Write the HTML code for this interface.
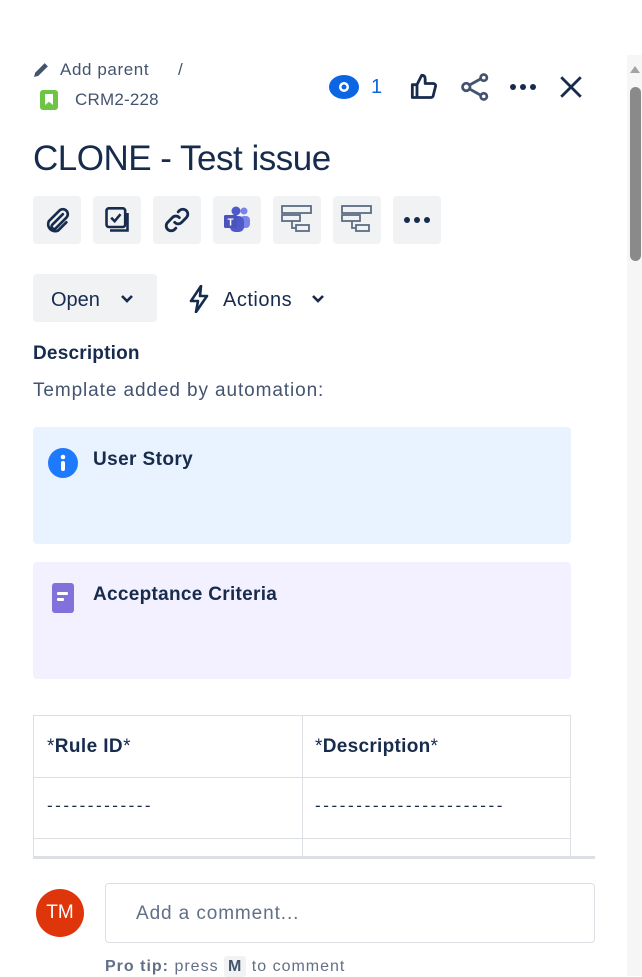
<!DOCTYPE html>
<html><head><meta charset="utf-8"><style>
*{box-sizing:border-box;margin:0;padding:0}
body{width:642px;height:976px;overflow:hidden;background:#fff;font-family:"Liberation Sans",sans-serif;color:#172b4d;position:relative}
.a{position:absolute}
.btn{position:absolute;top:196px;width:48px;height:48px;background:#f1f2f4;border-radius:4px;display:flex;align-items:center;justify-content:center}
</style></head><body>
<svg class="a" style="left:33px;top:61px" width="17" height="17" viewBox="0 0 16 16"><path d="M1 15l1-4 9-9 3 3-9 9z" fill="#44546f"/></svg>
<div class="a" style="left:60px;top:60px;font-size:17px;color:#44546f;letter-spacing:0.6px">Add parent</div>
<div class="a" style="left:178px;top:60px;font-size:17px;color:#44546f">/</div>
<div class="a" style="left:40px;top:90px;width:18px;height:20px;background:#6cc644;border-radius:3px"><div style="position:absolute;left:5px;top:4px;width:8px;height:11px;background:#fff;clip-path:polygon(0 0,100% 0,100% 100%,50% 70%,0 100%)"></div></div>
<div class="a" style="left:75px;top:90px;font-size:17px;color:#44546f;letter-spacing:0.2px">CRM2-228</div>
<svg class="a" style="left:329px;top:74px" width="30" height="26" viewBox="0 0 30 26"><ellipse cx="15" cy="13" rx="15" ry="12" fill="#0c66e4"/><circle cx="15" cy="13" r="5" fill="#fff"/><circle cx="15" cy="13" r="2.5" fill="#0c66e4"/></svg>
<div class="a" style="left:371px;top:76px;font-size:20px;color:#0c66e4">1</div>
<svg class="a" style="left:410px;top:73px" width="28" height="28" viewBox="0 0 24 24" fill="none" stroke="#172b4d" stroke-width="2.4" stroke-linejoin="round"><path d="M2 10h4v11H2zM6 10l4-8c2 0 3 1 3 3v4h7c1 0 2 1 2 2l-2 8c0 1-1 2-2 2H6"/></svg>
<svg class="a" style="left:460px;top:72px" width="30" height="30" viewBox="0 0 24 24" fill="none" stroke="#44546f" stroke-width="2.2"><circle cx="5" cy="12" r="3"/><circle cx="19" cy="4.5" r="2.5"/><circle cx="19" cy="19.5" r="2.5"/><path d="M7.5 10.5l9-5M7.5 13.5l9 5"/></svg>
<svg class="a" style="left:508px;top:80px" width="30" height="14"><circle cx="5" cy="7" r="3" fill="#172b4d"/><circle cx="15" cy="7" r="3" fill="#172b4d"/><circle cx="25" cy="7" r="3" fill="#172b4d"/></svg>
<svg class="a" style="left:558px;top:74px" width="26" height="26" viewBox="0 0 24 24" stroke="#172b4d" stroke-width="2.6"><path d="M3 3l18 18M21 3L3 21"/></svg>
<div class="a" style="left:33px;top:139px;font-size:35px;font-weight:500;letter-spacing:-0.5px">CLONE - Test issue</div>
<div class="btn" style="left:33px"><svg width="28" height="28" viewBox="0 0 24 24" fill="none" stroke="#172b4d" stroke-width="2.3" stroke-linecap="round"><path d="M17 7l-9 9a2 2 0 0 0 3 3l9-9a4 4 0 0 0-6-6l-9 9a6 6 0 0 0 8 8l7-7"/></svg></div>
<div class="btn" style="left:93px"><svg width="28" height="28" viewBox="0 0 24 24" fill="none" stroke="#172b4d" stroke-width="2.2"><rect x="3" y="2" width="16" height="16" rx="2"/><path d="M7 10l3 3 5-6"/><path d="M6 21h15V6"/></svg></div>
<div class="btn" style="left:153px"><svg width="28" height="28" viewBox="0 0 24 24" fill="none" stroke="#172b4d" stroke-width="2.4" stroke-linecap="round"><path d="M10 14a4 4 0 0 0 6 0l4-4a4 4 0 0 0-6-6l-1 1M14 10a4 4 0 0 0-6 0l-4 4a4 4 0 0 0 6 6l1-1"/></svg></div>
<div class="btn" style="left:213px"><svg width="30" height="30" viewBox="0 0 30 30"><circle cx="22" cy="6" r="3.5" fill="#7b83eb"/><rect x="18" y="11" width="10" height="12" rx="4" fill="#7b83eb"/><circle cx="14" cy="6" r="4.5" fill="#5059c9"/><rect x="8" y="11" width="14" height="16" rx="5" fill="#5059c9"/><rect x="2" y="10" width="13" height="13" rx="1.5" fill="#4b53bc"/><text x="8.5" y="20.5" font-size="10" font-weight="700" fill="#fff" text-anchor="middle" font-family="Liberation Sans">T</text></svg></div>
<div class="btn" style="left:273px"><svg width="34" height="34" viewBox="0 0 34 34" fill="none" stroke="#5e6c84" stroke-width="1.8"><rect x="2" y="3" width="29" height="7"/><rect x="2" y="12" width="18" height="6"/><rect x="16" y="22" width="13" height="6"/><path d="M12 18v7h4"/></svg></div>
<div class="btn" style="left:333px"><svg width="34" height="34" viewBox="0 0 34 34" fill="none" stroke="#5e6c84" stroke-width="1.8"><rect x="2" y="3" width="29" height="7"/><rect x="2" y="12" width="18" height="6"/><rect x="16" y="22" width="13" height="6"/><path d="M12 18v7h4"/></svg></div>
<div class="btn" style="left:393px"><svg width="30" height="10"><circle cx="5" cy="5" r="3" fill="#172b4d"/><circle cx="15" cy="5" r="3" fill="#172b4d"/><circle cx="25" cy="5" r="3" fill="#172b4d"/></svg></div>
<div class="a" style="left:33px;top:274px;width:124px;height:48px;background:#f1f2f4;border-radius:4px"></div>
<div class="a" style="left:51px;top:289px;font-size:20px">Open</div>
<svg class="a" style="left:120px;top:294px" width="14" height="10" viewBox="0 0 14 10" fill="none" stroke="#172b4d" stroke-width="2.6"><path d="M2 2l5 5 5-5"/></svg>
<svg class="a" style="left:188px;top:285px" width="22" height="28" viewBox="0 0 22 28"><path d="M13 1L3 16h7l-2 11 11-16h-7z" fill="none" stroke="#172b4d" stroke-width="2.6" stroke-linejoin="round"/></svg>
<div class="a" style="left:223px;top:289px;font-size:20px;letter-spacing:0.5px">Actions</div>
<svg class="a" style="left:311px;top:294px" width="14" height="10" viewBox="0 0 14 10" fill="none" stroke="#172b4d" stroke-width="2.6"><path d="M2 2l5 5 5-5"/></svg>
<div class="a" style="left:33px;top:343px;font-size:19px;font-weight:700;letter-spacing:0.2px">Description</div>
<div class="a" style="left:33px;top:380px;font-size:19px;color:#44546f;letter-spacing:0.9px">Template added by automation:</div>
<div class="a" style="left:33px;top:427px;width:538px;height:117px;background:#e9f2ff;border-radius:4px"></div>
<svg class="a" style="left:48px;top:448px" width="30" height="30" viewBox="0 0 30 30"><circle cx="15" cy="15" r="15" fill="#1d7afc"/><circle cx="15" cy="9" r="2.3" fill="#fff"/><rect x="13" y="13" width="4" height="10" rx="2" fill="#fff"/></svg>
<div class="a" style="left:93px;top:449px;font-size:19px;font-weight:700;letter-spacing:0.4px">User Story</div>
<div class="a" style="left:33px;top:562px;width:538px;height:117px;background:#f3f0ff;border-radius:4px"></div>
<div class="a" style="left:52px;top:583px;width:22px;height:30px;background:#8270db;border-radius:3px"><div style="position:absolute;left:5px;top:9px;width:11px;height:3px;background:#fff;border-radius:1px"></div><div style="position:absolute;left:5px;top:15px;width:7px;height:3px;background:#fff;border-radius:1px"></div></div>
<div class="a" style="left:93px;top:584px;font-size:19px;font-weight:700;letter-spacing:0.3px">Acceptance Criteria</div>
<div class="a" style="left:33px;top:715px;width:538px;height:143px;border:1px solid #dcdfe4;border-bottom:none;overflow:hidden">
<div class="a" style="left:268px;top:0;width:1px;height:143px;background:#dcdfe4"></div>
<div class="a" style="left:0;top:61px;width:538px;height:1px;background:#dcdfe4"></div>
<div class="a" style="left:0;top:122px;width:538px;height:1px;background:#dcdfe4"></div>
<div class="a" style="left:13px;top:20px;font-size:19px;letter-spacing:0.4px">*<b>Rule ID</b>*</div>
<div class="a" style="left:281px;top:20px;font-size:19px;letter-spacing:0.3px">*<b>Description</b>*</div>
<div class="a" style="left:13px;top:80px;font-size:17px;letter-spacing:2.5px">-------------</div>
<div class="a" style="left:281px;top:80px;font-size:17px;letter-spacing:2.6px">-----------------------</div>
</div>
<div class="a" style="left:33px;top:856px;width:562px;height:3px;background:#dcdfe4"></div>
<div class="a" style="left:36px;top:889px;width:48px;height:48px;border-radius:50%;background:#de350b;color:#fff;font-size:19px;display:flex;align-items:center;justify-content:center">TM</div>
<div class="a" style="left:105px;top:883px;width:490px;height:60px;border:1px solid #dcdfe4;border-radius:4px"></div>
<div class="a" style="left:136px;top:903px;font-size:19px;color:#626f86;letter-spacing:0.9px">Add a comment...</div>
<div class="a" style="left:105px;top:958px;font-size:16px;color:#626f86;letter-spacing:1px"><b>Pro tip:</b> press <span style="background:#f1f2f4;padding:2px 4px;border-radius:3px;font-weight:700;color:#44546f">M</span> to comment</div>
<div class="a" style="left:627px;top:55px;width:15px;height:921px;background:#f6f6f6"></div>
<svg class="a" style="left:629px;top:64px" width="12" height="10"><path d="M1 9L6 2l5 7z" fill="#a3a3a3"/></svg>
<div class="a" style="left:630px;top:87px;width:11px;height:174px;background:#8a8a8a;border-radius:6px"></div>
</body></html>
